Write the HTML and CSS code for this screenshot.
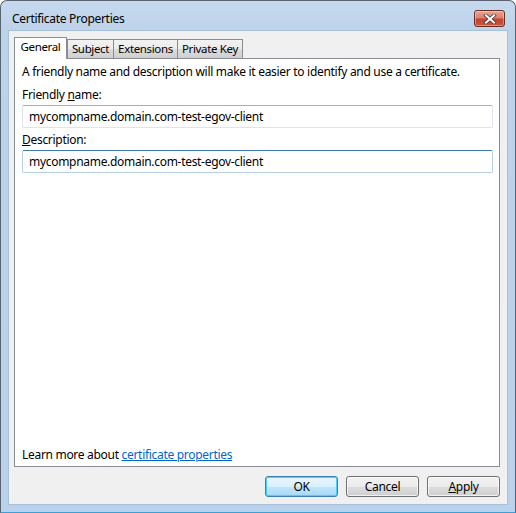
FILE: index.html
```html
<!DOCTYPE html>
<html>
<head>
<meta charset="utf-8">
<link rel="stylesheet" href="styles.css">
</head>
<body>
<div class="window">
  <div class="titlebar">
    <span class="title">Certificate Properties</span>
    <button class="close" aria-label="Close">
      <svg width="14" height="10" viewBox="0 0 14 10">
        <path d="M3 1.5 L11 8.5 M11 1.5 L3 8.5" stroke="#4a3a3a" stroke-width="3.6" stroke-linecap="square"/>
        <path d="M3 1.5 L11 8.5 M11 1.5 L3 8.5" stroke="#ffffff" stroke-width="2" stroke-linecap="square"/>
      </svg>
    </button>
  </div>
  <div class="client">
    <div class="tabs">
      <div class="tab selected tab-general">General</div>
      <div class="tab tab-subject">Subject</div>
      <div class="tab tab-ext">Extensions</div>
      <div class="tab tab-key">Private Key</div>
    </div>
    <div class="panel">
      <p class="intro">A friendly name and description will make it easier to identify and use a certificate.</p>
      <label class="label">Friendly <u>n</u>ame:</label>
      <div class="input">mycompname.domain.com-test-egov-client</div>
      <label class="label label-desc"><u>D</u>escription:</label>
      <div class="input focused">mycompname.domain.com-test-egov-client</div>
      <div class="spacer"></div>
      <p class="learn">Learn more about <a href="#" class="link">certificate properties</a></p>
    </div>
    <div class="buttons">
      <button class="btn default">OK</button>
      <button class="btn">Cancel</button>
      <button class="btn"><u>A</u>pply</button>
    </div>
  </div>
</div>
</body>
</html>
```

FILE: styles.css
```css
* { box-sizing: border-box; }
html, body { margin: 0; padding: 0; background: #ffffff; }
body {
  font-family: "Noto Sans", "DejaVu Sans", sans-serif;
  font-size: 12px;
  letter-spacing: -0.3px;
  color: #000;
}
.window {
  width: 516px;
  height: 513px;
  border: 1px solid #5a6470;
  border-bottom-color: #3aa0d8;
  border-radius: 7px 7px 0 0;
  background: linear-gradient(to bottom, #c6d9ee 0px, #bdd3ea 30px, #b9d1ea 100%);
  display: flex;
  flex-direction: column;
  padding: 0 7px 7px 7px;
}
.titlebar {
  height: 29px;
  display: flex;
  justify-content: space-between;
  align-items: flex-start;
  padding: 0 3px 0 4px;
}
.title {
  margin-top: 10px;
  font-size: 12px;
  line-height: 15px;
  color: #000;
}
.close {
  margin-top: 9px;
  width: 31px;
  height: 17px;
  padding: 0;
  border: 1px solid #6b2b25;
  border-radius: 3px;
  background: linear-gradient(to bottom, #e8a493 0%, #d98272 45%, #c3452f 55%, #c9573f 100%);
  box-shadow: inset 0 0 0 1px rgba(255,255,255,0.35);
  display: flex;
  align-items: center;
  justify-content: center;
}
.close svg { display: block; }
.client {
  flex: 1;
  background: #f0f0f0;
  border: 1px solid #a8c0d8;
  display: flex;
  flex-direction: column;
  padding: 6px 7px 7px 5px;
}
.tabs {
  display: flex;
  align-items: flex-end;
  height: 21px;
  position: relative;
  z-index: 1;
}
.tab {
  height: 19px;
  border: 1px solid #898c95;
  border-bottom: none;
  margin-left: -1px;
  background: linear-gradient(to bottom, #f2f2f2 0%, #ebebeb 50%, #dddddd 51%, #cfcfcf 100%);
  text-align: center;
  font-size: 11.5px;
  letter-spacing: -0.35px;
  line-height: 18px;
  color: #000;
}
.tab-general { width: 53px; margin-left: 0; }
.tab-subject { width: 47px; margin-left: 0; }
.tab-ext { width: 65px; }
.tab-key { width: 66px; }
.tab.selected {
  height: 22px;
  margin-bottom: -1px;
  background: #ffffff;
  line-height: 18px;
  position: relative;
  z-index: 2;
}
.panel {
  flex: 1;
  background: #ffffff;
  border: 1px solid #898c95;
  display: flex;
  flex-direction: column;
  padding: 5px 6px 4px 7px;
}
.intro { margin: 0; line-height: 15px; }
.label {
  display: block;
  margin-top: 8px;
  line-height: 15px;
}
.label-desc { margin-top: 4px; }
.input {
  margin-top: 3px;
  height: 23px;
  border: 1px solid #e2e3ea;
  border-top-color: #abadb3;
  border-radius: 2px;
  padding: 3px 6px 0 6px;
  line-height: 15px;
  background: #fff;
}
.input.focused {
  border-color: #b5cfe7;
  border-top-color: #3d7bad;
}
.spacer { flex: 1; }
.learn { margin: 0; line-height: 15px; }
.link { color: #0066cc; text-decoration: underline; }
.buttons {
  display: flex;
  justify-content: flex-end;
  gap: 8px;
  margin-top: 9px;
  height: 21px;
}
.btn {
  width: 73px;
  height: 21px;
  font-family: inherit;
  font-size: 12px;
  letter-spacing: -0.3px;
  color: #000;
  padding: 0;
  border: 1px solid #707070;
  border-radius: 3px;
  background: linear-gradient(to bottom, #f2f2f2 0%, #ebebeb 50%, #dddddd 51%, #cfcfcf 100%);
  box-shadow: inset 0 0 0 1px rgba(255,255,255,0.7);
}
.btn.default {
  border-color: #3c7fb1;
  box-shadow: inset 0 0 0 1px #48d3f6;
  background: linear-gradient(to bottom, #eaf6fd 0%, #d9f0fc 50%, #bee6fd 51%, #a7d9f5 100%);
}
```
